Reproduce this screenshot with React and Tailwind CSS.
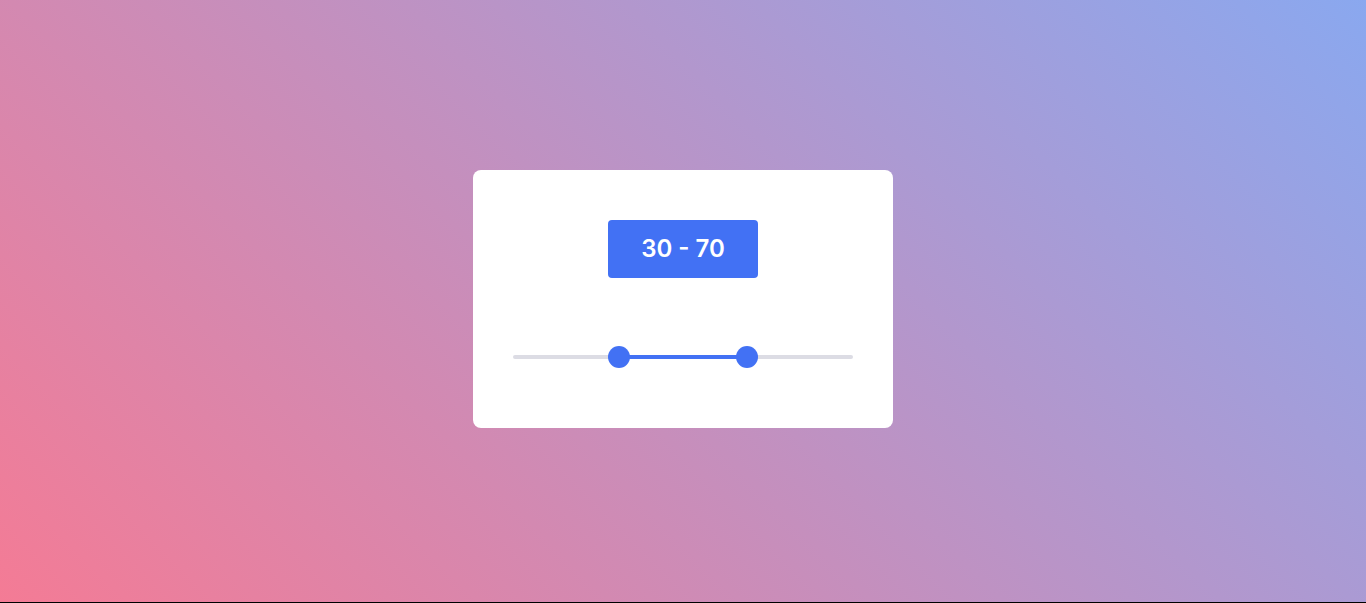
import React, { useState } from "react";

export default function App() {
  const [range] = useState([30, 70]);
  const thumb = 22;

  // thumbs travel inside the track, like a native range input
  const pos = (v) => `calc(${thumb / 2}px + (100% - ${thumb}px) * ${v / 100})`;

  return (
    <div className="min-h-screen bg-black" style={{ fontFamily: "Inter, 'Noto Sans', sans-serif" }}>
      <div className="h-[602px] flex items-center justify-center bg-[linear-gradient(45deg,#f47b95,#8aa8ef)]">
        <div className="w-[420px] h-[258px] mt-[-4px] bg-white rounded-lg px-10 pt-[50px] flex flex-col items-center">
          {/* Value badge */}
          <div className="w-[150px] h-[58px] bg-[#4271f4] rounded flex items-center justify-center text-white text-[24px] font-semibold">
            {range[0]} - {range[1]}
          </div>

          {/* Range slider */}
          <div className="relative w-full h-[22px] mt-[68px] flex items-center">
            <div className="w-full h-1 rounded-full bg-[#dcdce4]" />
            <div
              className="absolute h-1 bg-[#4271f4]"
              style={{ left: pos(range[0]), width: `calc((100% - ${thumb}px) * ${(range[1] - range[0]) / 100})` }}
            />
            {range.map((v) => (
              <div
                key={v}
                className="absolute top-0 w-[22px] h-[22px] -ml-[11px] rounded-full bg-[#4271f4]"
                style={{ left: pos(v) }}
              />
            ))}
          </div>
        </div>
      </div>
    </div>
  );
}
